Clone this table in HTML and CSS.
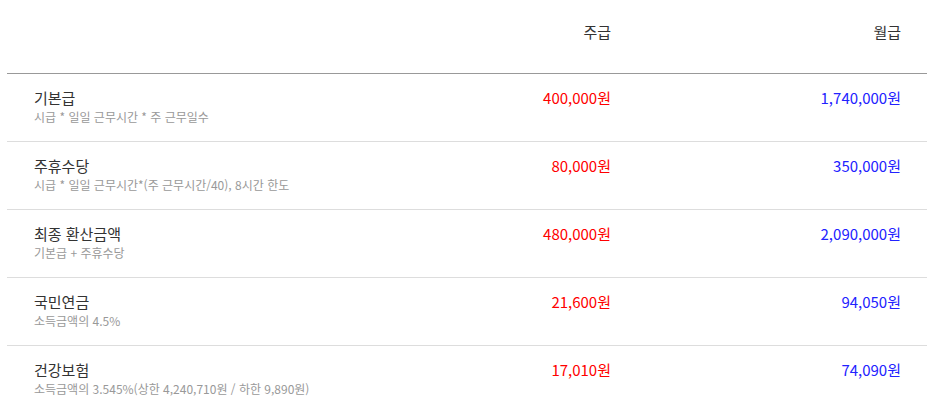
FILE: index.html
```html
<!DOCTYPE html>
<html lang="ko">
<head>
    <meta charset="UTF-8">
    <meta name="viewport" content="width=device-width, initial-scale=1.0">
    <title>급여 계산</title>
    <link rel="stylesheet" href="styles.css">
</head>
<body>
    <table class="pay-table">
        <thead>
            <tr>
                <th class="item"></th>
                <th class="amount">주급</th>
                <th class="amount">월급</th>
            </tr>
        </thead>
        <tbody>
            <tr>
                <td class="item">
                    <div class="name">기본급</div>
                    <div class="desc">시급 * 일일 근무시간 * 주 근무일수</div>
                </td>
                <td class="amount week">400,000원</td>
                <td class="amount month">1,740,000원</td>
            </tr>
            <tr>
                <td class="item">
                    <div class="name">주휴수당</div>
                    <div class="desc">시급 * 일일 근무시간*(주 근무시간/40), 8시간 한도</div>
                </td>
                <td class="amount week">80,000원</td>
                <td class="amount month">350,000원</td>
            </tr>
            <tr>
                <td class="item">
                    <div class="name">최종 환산금액</div>
                    <div class="desc">기본급 + 주휴수당</div>
                </td>
                <td class="amount week">480,000원</td>
                <td class="amount month">2,090,000원</td>
            </tr>
            <tr>
                <td class="item">
                    <div class="name">국민연금</div>
                    <div class="desc">소득금액의 4.5%</div>
                </td>
                <td class="amount week">21,600원</td>
                <td class="amount month">94,050원</td>
            </tr>
            <tr>
                <td class="item">
                    <div class="name">건강보험</div>
                    <div class="desc">소득금액의 3.545%(상한 4,240,710원 / 하한 9,890원)</div>
                </td>
                <td class="amount week">17,010원</td>
                <td class="amount month">74,090원</td>
            </tr>
        </tbody>
    </table>
</body>
</html>
```

FILE: styles.css
```css
body {
    font-family: "Noto Sans CJK KR", "Noto Sans", sans-serif;
    margin: 0;
    color: #333;
}
.pay-table {
    width: 920px;
    margin: 0 7px;
    border-collapse: collapse;
    table-layout: fixed;
}
.pay-table th {
    font-weight: normal;
    font-size: 15px;
    line-height: 20px;
    padding: 22px 26px 31px 27px;
    border-bottom: 1px solid #999;
}
.pay-table td {
    padding: 14px 26px 15px 27px;
    vertical-align: top;
    border-bottom: 1px solid #ddd;
}
.pay-table tbody tr:last-child td {
    border-bottom: none;
}
.item {
    text-align: left;
}
.amount {
    text-align: right;
    width: 237px;
    font-size: 15px;
    line-height: 20px;
}
.name {
    font-size: 15px;
    line-height: 20px;
}
.desc {
    font-size: 12px;
    line-height: 18px;
    color: #999;
}
.week {
    color: #ff0000;
}
.month {
    color: #2222ff;
}
```
